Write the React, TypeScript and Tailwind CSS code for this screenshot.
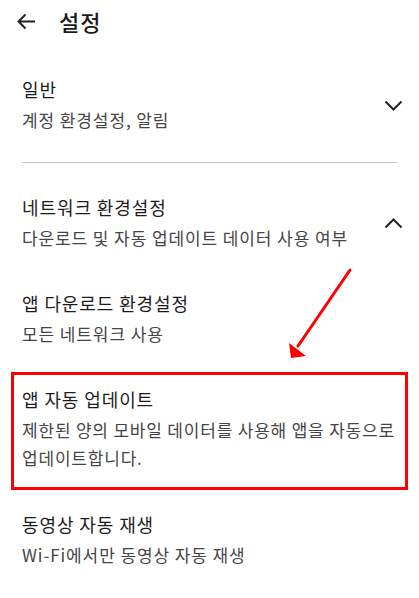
import React from 'react';

const font = { fontFamily: '"Noto Sans CJK KR", "Noto Sans", sans-serif' };

const ChevronDown: React.FC = () => (
  <svg width="19" height="11" viewBox="0 0 19 11" fill="none">
    <path d="M1.5 1.5 L9.5 9.5 L17.5 1.5" stroke="#222" strokeWidth="2" />
  </svg>
);

const ChevronUp: React.FC = () => (
  <svg width="19" height="11" viewBox="0 0 19 11" fill="none">
    <path d="M1.5 9.5 L9.5 1.5 L17.5 9.5" stroke="#222" strokeWidth="2" />
  </svg>
);

const Item: React.FC<{ title: string; sub: string; right?: React.ReactNode }> = ({ title, sub, right }) => (
  <div className="flex items-center justify-between px-[22px] py-[19px]">
    <div>
      <div className="text-[18px] leading-[26px] tracking-[0.9px] text-[#1c1c1c]">{title}</div>
      <div className="mt-1 text-[17px] leading-[28px] tracking-[0.9px] text-[#454545]">{sub}</div>
    </div>
    {right && <div className="mr-[-6px] flex">{right}</div>}
  </div>
);

const App: React.FC = () => {
  return (
    <div className="relative h-[598px] w-[419px] overflow-hidden bg-white" style={font}>
      <header className="flex h-[42px] items-center">
        <svg className="ml-[17px]" width="19" height="17" viewBox="0 0 19 17" fill="none">
          <path d="M18 8.5 H2 M8.5 1.5 L1.5 8.5 L8.5 15.5" stroke="#222" strokeWidth="2" />
        </svg>
        <h1 className="ml-[23px] text-[22px] font-medium tracking-[1px] text-[#1c1c1c]">설정</h1>
      </header>

      <div className="mt-[15px]">
        <Item title="일반" sub="계정 환경설정, 알림" right={<ChevronDown />} />
      </div>
      <div className="mx-[22px] mt-[9px] mb-[12px] h-px bg-[#c8c8c8]" />
      <Item title="네트워크 환경설정" sub="다운로드 및 자동 업데이트 데이터 사용 여부" right={<ChevronUp />} />
      <Item title="앱 다운로드 환경설정" sub="모든 네트워크 사용" />

      <div className="mx-[11px] mt-[5px] mb-[2px] border-[3px] border-[#ff0000] pl-[8px] pr-0 pt-[11px] pb-[15px]">
        <div className="text-[18px] leading-[26px] tracking-[0.9px] text-[#1c1c1c]">앱 자동 업데이트</div>
        <div className="mt-1 break-keep text-[17px] leading-[28px] tracking-[0.8px] text-[#454545]">
          제한된 양의 모바일 데이터를 사용해 앱을 자동으로 업데이트합니다.
        </div>
      </div>

      <Item title="동영상 자동 재생" sub="Wi-Fi에서만 동영상 자동 재생" />

      <svg className="absolute left-0 top-0" width="419" height="598" viewBox="0 0 419 598" fill="none">
        <path d="M350 270 L298 346" stroke="#ff0000" strokeWidth="3" strokeLinecap="round" />
        <path d="M289 343 L306 356 L291 358 Z" fill="#ff0000" />
      </svg>
    </div>
  );
};

export default App;
